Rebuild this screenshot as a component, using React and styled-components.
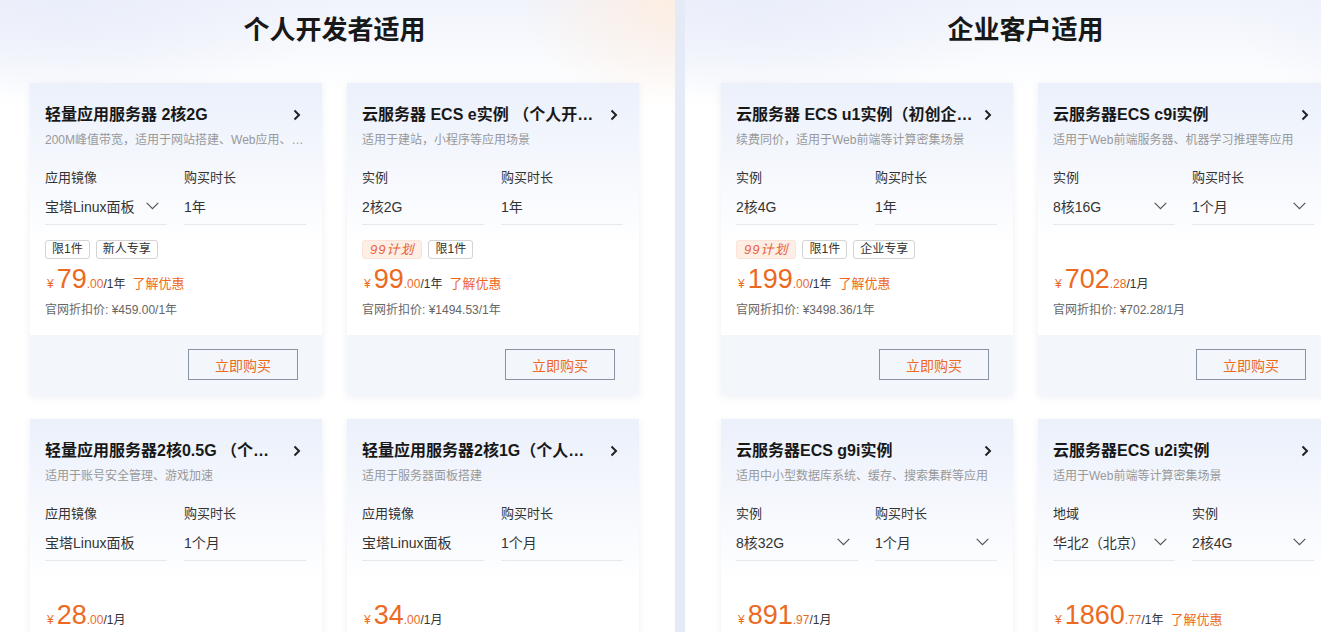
import React from 'react'
import styled, { createGlobalStyle } from 'styled-components'

const GlobalStyle = createGlobalStyle`
  html, body {
    margin: 0;
    padding: 0;
    overflow: hidden;
    background: #e4ebf7;
  }
  body {
    font-family: "Liberation Sans", "Noto Sans CJK SC", sans-serif;
    color: #333;
  }
`

const ORANGE = '#ec6a1f'

const Page = styled.div`
  display: flex;
  gap: 10px;
  width: 1400px;
  height: 632px;
  background: #e4ebf7;
`

const Panel = styled.section`
  flex: none;
  width: ${p => p.$width}px;
  box-sizing: border-box;
  padding-left: ${p => p.$padLeft}px;
  background:
    radial-gradient(ellipse 150px 110px at 100% 0, ${p => p.$corner} 0, rgba(255,255,255,0) 100%),
    radial-gradient(ellipse 260px 110px at 10% 0, #eaeefa 0, rgba(255,255,255,0) 100%),
    linear-gradient(180deg, #f0f3fb 0, #ffffff 95px);
`

const Inner = styled.div`
  width: 609px;
`

const PanelTitle = styled.h2`
  margin: 0;
  padding-top: 10px;
  height: 36px;
  line-height: 36px;
  text-align: center;
  font-size: 26px;
  font-weight: 700;
  color: #181818;
  font-family: "Noto Sans CJK SC", sans-serif;
`

const Grid = styled.div`
  margin-top: 37px;
  display: grid;
  grid-template-columns: 292px 292px;
  column-gap: 25px;
  row-gap: 24px;
`

const Card = styled.div`
  width: 292px;
  height: 312px;
  background: #fff;
  box-shadow: 0 2px 8px rgba(40, 60, 110, 0.08);
  display: flex;
  flex-direction: column;
`

const Body = styled.div`
  height: 252px;
  box-sizing: border-box;
  padding: 20px 17px 0 15px;
  background: linear-gradient(180deg, #ebf0fb 0, #ffffff 165px);
`

const TitleRow = styled.div`
  display: flex;
  align-items: center;
  height: 24px;
`

const Title = styled.div`
  flex: 0 1 auto;
  max-width: 238px;
  min-width: 0;
  font-size: 16px;
  font-weight: 700;
  line-height: 24px;
  color: #181818;
  white-space: nowrap;
  overflow: hidden;
  text-overflow: ellipsis;
`

const Arrow = styled.svg`
  margin-left: auto;
  margin-right: 4px;
  flex: none;
`

const Sub = styled.div`
  margin-top: 4px;
  font-size: 12px;
  line-height: 18px;
  color: #999;
  white-space: nowrap;
  overflow: hidden;
  text-overflow: ellipsis;
`

const Fields = styled.div`
  margin-top: 19px;
  display: grid;
  grid-template-columns: 122px 122px;
  column-gap: 17px;
`

const Field = styled.div`
  border-bottom: 1px solid #e8e8e8;
  padding-bottom: 7px;
`

const Label = styled.div`
  font-size: 13px;
  line-height: 20px;
  color: #333;
`

const Value = styled.div`
  margin-top: 7px;
  height: 22px;
  display: flex;
  align-items: center;
  justify-content: space-between;
  font-size: 14px;
  color: #333;
  padding-right: 8px;
`

const Tags = styled.div`
  margin-top: 15px;
  height: 19px;
  display: flex;
  gap: 6px;
`

const Tag = styled.span`
  box-sizing: border-box;
  height: 19px;
  line-height: 17px;
  padding: 0 ${p => (p.$plan ? '7px' : '6px')};
  font-size: ${p => (p.$plan ? '13px' : '12px')};
  border-radius: 3px;
  border: 1px solid ${p => (p.$plan ? '#fde3d6' : '#d4d4d4')};
  background: ${p => (p.$plan ? '#fdeee6' : '#fff')};
  color: ${p => (p.$plan ? '#e8633b' : '#333')};
  font-style: ${p => (p.$plan ? 'italic' : 'normal')};
  letter-spacing: ${p => (p.$plan ? '1px' : '0')};
`

const PriceRow = styled.div`
  margin-top: 5px;
  height: 30px;
  display: flex;
  align-items: baseline;
  color: ${ORANGE};
  padding-left: 2px;
`

const Yen = styled.span`
  font-size: 12px;
  margin-right: 3px;
`

const Big = styled.span`
  font-size: 27px;
  line-height: 30px;
`

const Small = styled.span`
  font-size: 12px;
`

const Unit = styled.span`
  font-size: 12px;
  color: #333;
`

const Promo = styled.span`
  margin-left: 7px;
  font-size: 13px;
  color: ${ORANGE};
`

const Orig = styled.div`
  margin-top: 7px;
  font-size: 12px;
  line-height: 18px;
  color: #666;
`

const Footer = styled.div`
  flex: 1;
  background: #f3f6fb;
  display: flex;
  justify-content: flex-end;
  align-items: flex-start;
  padding: 14px 24px 0 0;
`

const BuyButton = styled.button`
  width: 110px;
  height: 31px;
  box-sizing: border-box;
  border: 1px solid #8a93a6;
  background: transparent;
  color: ${ORANGE};
  font-size: 14px;
  font-family: inherit;
  cursor: pointer;
`

const Chevron = () => (
  <Arrow width="8" height="12" viewBox="0 0 8 12">
    <path d="M1.5 1.5 L6 6 L1.5 10.5" fill="none" stroke="#222" strokeWidth="2" />
  </Arrow>
)

const Down = () => (
  <svg width="13" height="8" viewBox="0 0 13 8">
    <path d="M0.7 0.8 L6.5 6.6 L12.3 0.8" fill="none" stroke="#555" strokeWidth="1.2" />
  </svg>
)

const personal = [
  {
    title: '轻量应用服务器 2核2G',
    sub: '200M峰值带宽，适用于网站搭建、Web应用、电商网站等场景',
    fields: [
      { label: '应用镜像', value: '宝塔Linux面板', select: true },
      { label: '购买时长', value: '1年' },
    ],
    tags: ['限1件', '新人专享'],
    price: ['79', '.00', '/1年'],
    promo: true,
    orig: '¥459.00/1年',
  },
  {
    title: '云服务器 ECS e实例 （个人开发者）',
    sub: '适用于建站，小程序等应用场景',
    fields: [
      { label: '实例', value: '2核2G' },
      { label: '购买时长', value: '1年' },
    ],
    tags: ['99计划', '限1件'],
    price: ['99', '.00', '/1年'],
    promo: true,
    orig: '¥1494.53/1年',
  },
  {
    title: '轻量应用服务器2核0.5G （个人开发者）',
    sub: '适用于账号安全管理、游戏加速',
    fields: [
      { label: '应用镜像', value: '宝塔Linux面板' },
      { label: '购买时长', value: '1个月' },
    ],
    tags: [],
    price: ['28', '.00', '/1月'],
  },
  {
    title: '轻量应用服务器2核1G（个人开发者）',
    sub: '适用于服务器面板搭建',
    fields: [
      { label: '应用镜像', value: '宝塔Linux面板' },
      { label: '购买时长', value: '1个月' },
    ],
    tags: [],
    price: ['34', '.00', '/1月'],
  },
]

const business = [
  {
    title: '云服务器 ECS u1实例（初创企业）',
    sub: '续费同价，适用于Web前端等计算密集场景',
    fields: [
      { label: '实例', value: '2核4G' },
      { label: '购买时长', value: '1年' },
    ],
    tags: ['99计划', '限1件', '企业专享'],
    price: ['199', '.00', '/1年'],
    promo: true,
    orig: '¥3498.36/1年',
  },
  {
    title: '云服务器ECS c9i实例',
    sub: '适用于Web前端服务器、机器学习推理等应用',
    fields: [
      { label: '实例', value: '8核16G', select: true },
      { label: '购买时长', value: '1个月', select: true },
    ],
    tags: [],
    price: ['702', '.28', '/1月'],
    orig: '¥702.28/1月',
  },
  {
    title: '云服务器ECS g9i实例',
    sub: '适用中小型数据库系统、缓存、搜索集群等应用',
    fields: [
      { label: '实例', value: '8核32G', select: true },
      { label: '购买时长', value: '1个月', select: true },
    ],
    tags: [],
    price: ['891', '.97', '/1月'],
  },
  {
    title: '云服务器ECS u2i实例',
    sub: '适用于Web前端等计算密集场景',
    fields: [
      { label: '地域', value: '华北2（北京）', select: true },
      { label: '实例', value: '2核4G', select: true },
    ],
    tags: [],
    price: ['1860', '.77', '/1年'],
    promo: true,
  },
]

function ProductCard({ item }) {
  const [int, dec, unit] = item.price
  return (
    <Card>
      <Body>
        <TitleRow>
          <Title>{item.title}</Title>
          <Chevron />
        </TitleRow>
        <Sub>{item.sub}</Sub>
        <Fields>
          {item.fields.map(f => (
            <Field key={f.label}>
              <Label>{f.label}</Label>
              <Value>
                <span>{f.value}</span>
                {f.select && <Down />}
              </Value>
            </Field>
          ))}
        </Fields>
        <Tags>
          {item.tags.map(t => (
            <Tag key={t} $plan={t === '99计划'}>{t}</Tag>
          ))}
        </Tags>
        <PriceRow>
          <Yen>¥</Yen>
          <Big>{int}</Big>
          <Small>{dec}</Small>
          <Unit>{unit}</Unit>
          {item.promo && <Promo>了解优惠</Promo>}
        </PriceRow>
        {item.orig && <Orig>官网折扣价: {item.orig}</Orig>}
      </Body>
      <Footer>
        <BuyButton>立即购买</BuyButton>
      </Footer>
    </Card>
  )
}

export default function App() {
  return (
    <>
      <GlobalStyle />
      <Page>
        <Panel $width={675} $padLeft={30} $corner="#fdeee2">
          <Inner>
            <PanelTitle>个人开发者适用</PanelTitle>
            <Grid>
              {personal.map(item => <ProductCard key={item.title} item={item} />)}
            </Grid>
          </Inner>
        </Panel>
        <Panel $width={700} $padLeft={36} $corner="#eef1fb">
          <Inner>
            <PanelTitle>企业客户适用</PanelTitle>
            <Grid>
              {business.map(item => <ProductCard key={item.title} item={item} />)}
            </Grid>
          </Inner>
        </Panel>
      </Page>
    </>
  )
}
